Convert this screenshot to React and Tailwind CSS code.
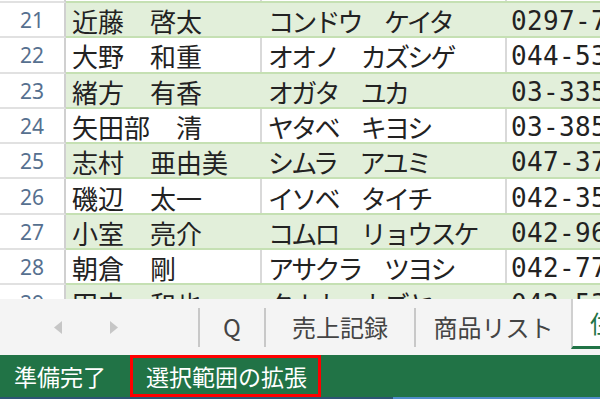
const rows = [
  { n: 21, name: "近藤　啓太", kana: "コンドウ　ケイタ", tel: "0297-76-1122" },
  { n: 22, name: "大野　和重", kana: "オオノ　カズシゲ", tel: "044-531-2233" },
  { n: 23, name: "緒方　有香", kana: "オガタ　ユカ", tel: "03-3356-4455" },
  { n: 24, name: "矢田部　清", kana: "ヤタベ　キヨシ", tel: "03-3851-6677" },
  { n: 25, name: "志村　亜由美", kana: "シムラ　アユミ", tel: "047-371-8899" },
  { n: 26, name: "磯辺　太一", kana: "イソベ　タイチ", tel: "042-351-1010" },
  { n: 27, name: "小室　亮介", kana: "コムロ　リョウスケ", tel: "042-961-2020" },
  { n: 28, name: "朝倉　剛", kana: "アサクラ　ツヨシ", tel: "042-771-3030" },
  { n: 29, name: "田中　和也", kana: "タナカ　カズヤ", tel: "042-531-4040" },
];

const Row = ({ r, green }) => (
  <div className="flex h-[35.3px] shrink-0">
    <div className="w-[66px] shrink-0 flex items-center justify-center pt-[2px] bg-white border-r-2 border-b-2 border-r-[#d0d0d0] border-b-[#e1e1e1] text-[21px] leading-none text-[#56708f] font-['Noto_Sans',sans-serif]">
      {r.n}
    </div>
    <div
      className={
        green
          ? "flex flex-1 min-w-0 border-b-2 border-[#c5e0b3] bg-[#e2efda]"
          : "flex flex-1 min-w-0 border-b-2 border-[#c5e0b3] bg-white"
      }
    >
      {/* 氏名 */}
      <div
        className={
          green
            ? "w-[196px] shrink-0 flex items-center pt-[3px] pl-[6px] border-r-2 border-transparent text-[26px] leading-none whitespace-nowrap"
            : "w-[196px] shrink-0 flex items-center pt-[3px] pl-[6px] border-r-2 border-[#d9d9d9] text-[26px] leading-none whitespace-nowrap"
        }
      >
        {r.name}
      </div>
      {/* フリガナ */}
      <div
        className={
          green
            ? "w-[245px] shrink-0 flex items-center pt-[3px] pl-[6px] border-r-2 border-transparent text-[26px] leading-none tracking-[-2.8px] whitespace-nowrap"
            : "w-[245px] shrink-0 flex items-center pt-[3px] pl-[6px] border-r-2 border-[#d9d9d9] text-[26px] leading-none tracking-[-2.8px] whitespace-nowrap"
        }
      >
        {r.kana}
      </div>
      {/* 電話番号 */}
      <div className="flex-1 min-w-0 flex items-center pt-[3px] pl-[4px] text-[26px] leading-none tracking-[0.35px] whitespace-nowrap overflow-hidden font-['DejaVu_Sans_Mono',monospace]">
        {r.tel}
      </div>
    </div>
  </div>
);

const Sep = () => <div className="w-[2px] h-[39px] self-center bg-[#c8c8c8] shrink-0" />;

export default function App() {
  return (
    <div className="w-[600px] h-[399px] flex flex-col overflow-hidden bg-white text-[#222] font-['Noto_Sans_CJK_JP','Noto_Sans',sans-serif]">
      {/* シート */}
      <div className="h-[299px] shrink-0 overflow-hidden flex flex-col">
        <div className="flex h-[3px] shrink-0">
          <div className="w-[66px] shrink-0 border-r-2 border-b-2 border-r-[#d0d0d0] border-b-[#e1e1e1]" />
          <div className="flex flex-1 border-b-2 border-[#c5e0b3]">
            <div className="w-[196px] shrink-0 border-r-2 border-[#d9d9d9]" />
            <div className="w-[245px] shrink-0 border-r-2 border-[#d9d9d9]" />
          </div>
        </div>
        {rows.map((r, i) => (
          <Row key={r.n} r={r} green={i % 2 === 0} />
        ))}
      </div>

      {/* シート見出し */}
      <div className="h-[56px] shrink-0 flex bg-[#f4f4f4] text-[24px] leading-none text-[#444]">
        <div className="w-[198px] shrink-0 flex items-center pl-[54px] gap-[48px]">
          <svg width="8" height="13" viewBox="0 0 8 13">
            <path d="M8 0 L0 6.5 L8 13 Z" fill="#c6c6c6" />
          </svg>
          <svg width="8" height="13" viewBox="0 0 8 13">
            <path d="M0 0 L8 6.5 L0 13 Z" fill="#c6c6c6" />
          </svg>
        </div>
        <Sep />
        <div className="w-[64px] shrink-0 flex items-center justify-center">Q</div>
        <Sep />
        <div className="w-[148px] shrink-0 flex items-center justify-center">売上記録</div>
        <Sep />
        <div className="w-[155px] shrink-0 flex items-center justify-center">商品リスト</div>
        <div className="flex-1 min-w-0 h-[50px] flex items-center pl-[17px] bg-white border-l-2 border-l-[#d0d0d0] border-b-[3px] border-b-[#217346] text-[#217346] whitespace-nowrap overflow-hidden">
          住所録
        </div>
      </div>

      {/* ステータスバー */}
      <div className="h-[42px] shrink-0 flex bg-[#217346] text-white text-[23px] leading-none">
        <div className="w-[130px] shrink-0 flex items-center pl-[14px]">準備完了</div>
        <div className="w-[191px] shrink-0 flex items-center pl-[13px] border-[3px] border-[#ff0000]">
          選択範囲の拡張
        </div>
      </div>
      <div className="h-[2px] shrink-0 flex">
        <div className="w-[393px] bg-[#2d5574]" />
        <div className="flex-1 bg-[#4f8cc9]" />
      </div>
    </div>
  );
}
